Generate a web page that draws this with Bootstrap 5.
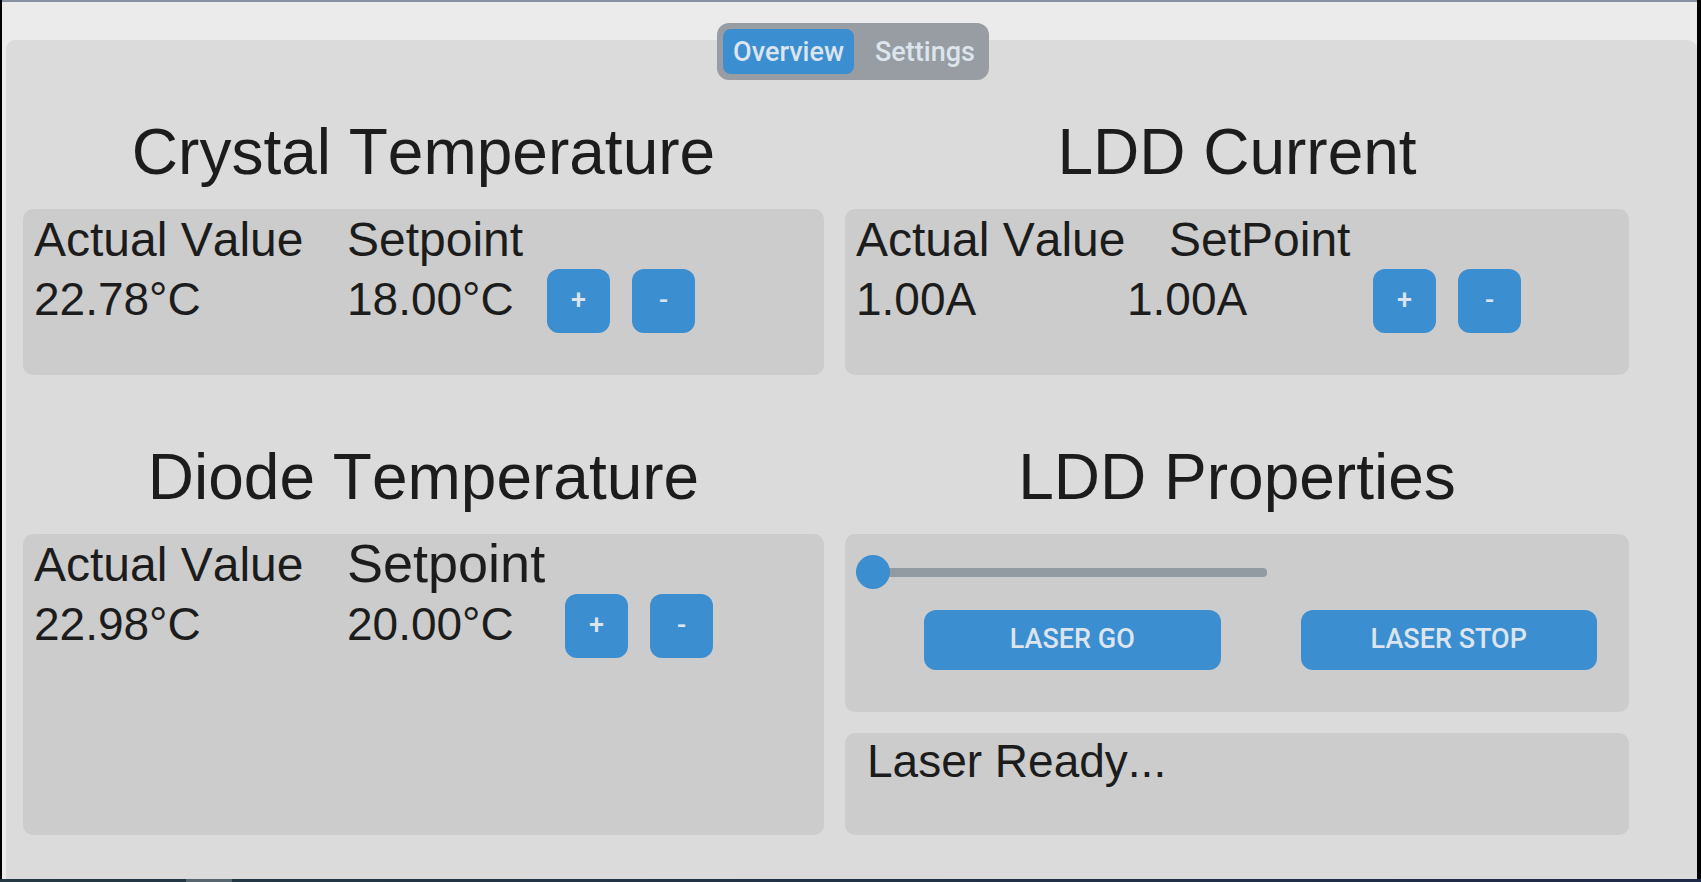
<!DOCTYPE html>
<html lang="en">
<head>
<meta charset="utf-8">
<meta name="viewport" content="width=device-width, initial-scale=1">
<title>Laser Control</title>
<link href="https://cdn.jsdelivr.net/npm/bootstrap@5.3.0/dist/css/bootstrap.min.css" rel="stylesheet">
<style>
  :root { --accent: #3b8ed0; --ink: #1c1c1c; --on-accent: #dce4ee; }
  body { background: #000; color: var(--ink); font-family: "Liberation Sans", Arial, sans-serif; font-kerning: none; }
  .window { background: #ebebeb; border-top: 2px solid #8690a0; margin: 0 4px 0 2px; padding: 38px 0 0 4px; }
  .desktop-edge { height: 3px; background: linear-gradient(90deg, #57666f, #57666f) 186px 0 / 46px 3px no-repeat, linear-gradient(90deg, #243944, #1f2a48); }
  .frame { background: #dbdbdb; border-radius: 9px 9px 0 0; padding: 0 68px 44px 17px; }
  .tabs { background: #979da2; border-radius: 12px; padding: 6px 4px 6px 6px; margin: -17px 0 0 54px; height: 57px; gap: 11px; }
  .tabs .btn { border-radius: 8px; padding: 0 10px; }
  .ctl { font-family: Roboto, sans-serif; font-size: 27px; font-weight: 500; line-height: 32px; color: var(--on-accent); border: 0; }
  .ctl:hover, .ctl.active { background: var(--accent) !important; color: var(--on-accent) !important; }
  .dash { display: grid; grid-template-columns: 801fr 784fr; grid-template-rows: auto auto auto 1fr; column-gap: 21px; }
  .heading { font-size: 64px; font-weight: 400; line-height: 72px; text-align: center; margin: 36px 0 21px; }
  .heading.second { margin-top: 66px; }
  .panel { background: #ccc; border-radius: 10px; padding: 0 11px; }
  .short { height: 166px; }
  .labels { height: 60px; font-size: 48px; line-height: 62px; }
  .values { height: 64px; font-size: 46px; line-height: 60px; }
  .big { font-size: 54px; line-height: 58px; }
  .c-first { width: 313px; }
  .c-first-sm { width: 271px; }
  .c-set { width: 200px; }
  .c-set-md { width: 218px; }
  .c-set-lg { width: 246px; }
  .step { width: 63px; height: 64px; border-radius: 12px; background: var(--accent); padding: 0 0 2px; margin-right: 22px; }
  .props { height: 178px; padding-top: 21px; }
  .slide { display: block; width: 411px; height: 34px; margin: 0; background: transparent; appearance: none; -webkit-appearance: none; }
  .slide::-webkit-slider-runnable-track { height: 9px; background: #939ba2; border-radius: 4px; }
  .slide::-webkit-slider-thumb { -webkit-appearance: none; width: 34px; height: 34px; margin-top: -13px; border-radius: 50%; background: var(--accent); border: 0; }
  .actions { margin-top: 21px; padding: 0 21px 0 68px; gap: 80px; }
  .actions .btn { flex: 1; height: 60px; border-radius: 12px; background: var(--accent); padding: 0 0 2px; }
  .status { font-size: 46px; line-height: 56px; padding: 0 22px; margin-top: 21px; }
</style>
</head>
<body class="d-flex flex-column min-vh-100">
<div class="window d-flex flex-column flex-grow-1">
  <main class="frame d-flex flex-column flex-grow-1">
    <nav class="tabs d-flex align-self-center" aria-label="Views">
      <button type="button" class="btn ctl active">Overview</button>
      <button type="button" class="btn ctl">Settings</button>
    </nav>
    <div class="dash flex-grow-1">
      <h1 class="heading">Crystal Temperature</h1>
      <h1 class="heading">LDD Current</h1>

      <section class="panel short">
        <div class="labels d-flex"><span class="c-first">Actual Value</span><span>Setpoint</span></div>
        <div class="values d-flex">
          <span class="c-first">22.78°C</span><span class="c-set">18.00°C</span>
          <button type="button" class="btn ctl step">+</button><button type="button" class="btn ctl step">-</button>
        </div>
      </section>
      <section class="panel short">
        <div class="labels d-flex"><span class="c-first">Actual Value</span><span>SetPoint</span></div>
        <div class="values d-flex">
          <span class="c-first-sm">1.00A</span><span class="c-set-lg">1.00A</span>
          <button type="button" class="btn ctl step">+</button><button type="button" class="btn ctl step">-</button>
        </div>
      </section>

      <h1 class="heading second">Diode Temperature</h1>
      <h1 class="heading second">LDD Properties</h1>

      <section class="panel">
        <div class="labels d-flex"><span class="c-first">Actual Value</span><span class="big">Setpoint</span></div>
        <div class="values d-flex">
          <span class="c-first">22.98°C</span><span class="c-set-md">20.00°C</span>
          <button type="button" class="btn ctl step">+</button><button type="button" class="btn ctl step">-</button>
        </div>
      </section>
      <div class="d-flex flex-column">
        <section class="panel props">
          <input type="range" class="slide" min="0" max="100" value="0" aria-label="Laser current">
          <div class="actions d-flex">
            <button type="button" class="btn ctl">LASER GO</button>
            <button type="button" class="btn ctl">LASER STOP</button>
          </div>
        </section>
        <section class="panel status flex-grow-1" role="status">Laser Ready...</section>
      </div>
    </div>
  </main>
</div>
<div class="desktop-edge"></div>
<script src="https://cdn.jsdelivr.net/npm/bootstrap@5.3.0/dist/js/bootstrap.bundle.min.js"></script>
</body>
</html>
